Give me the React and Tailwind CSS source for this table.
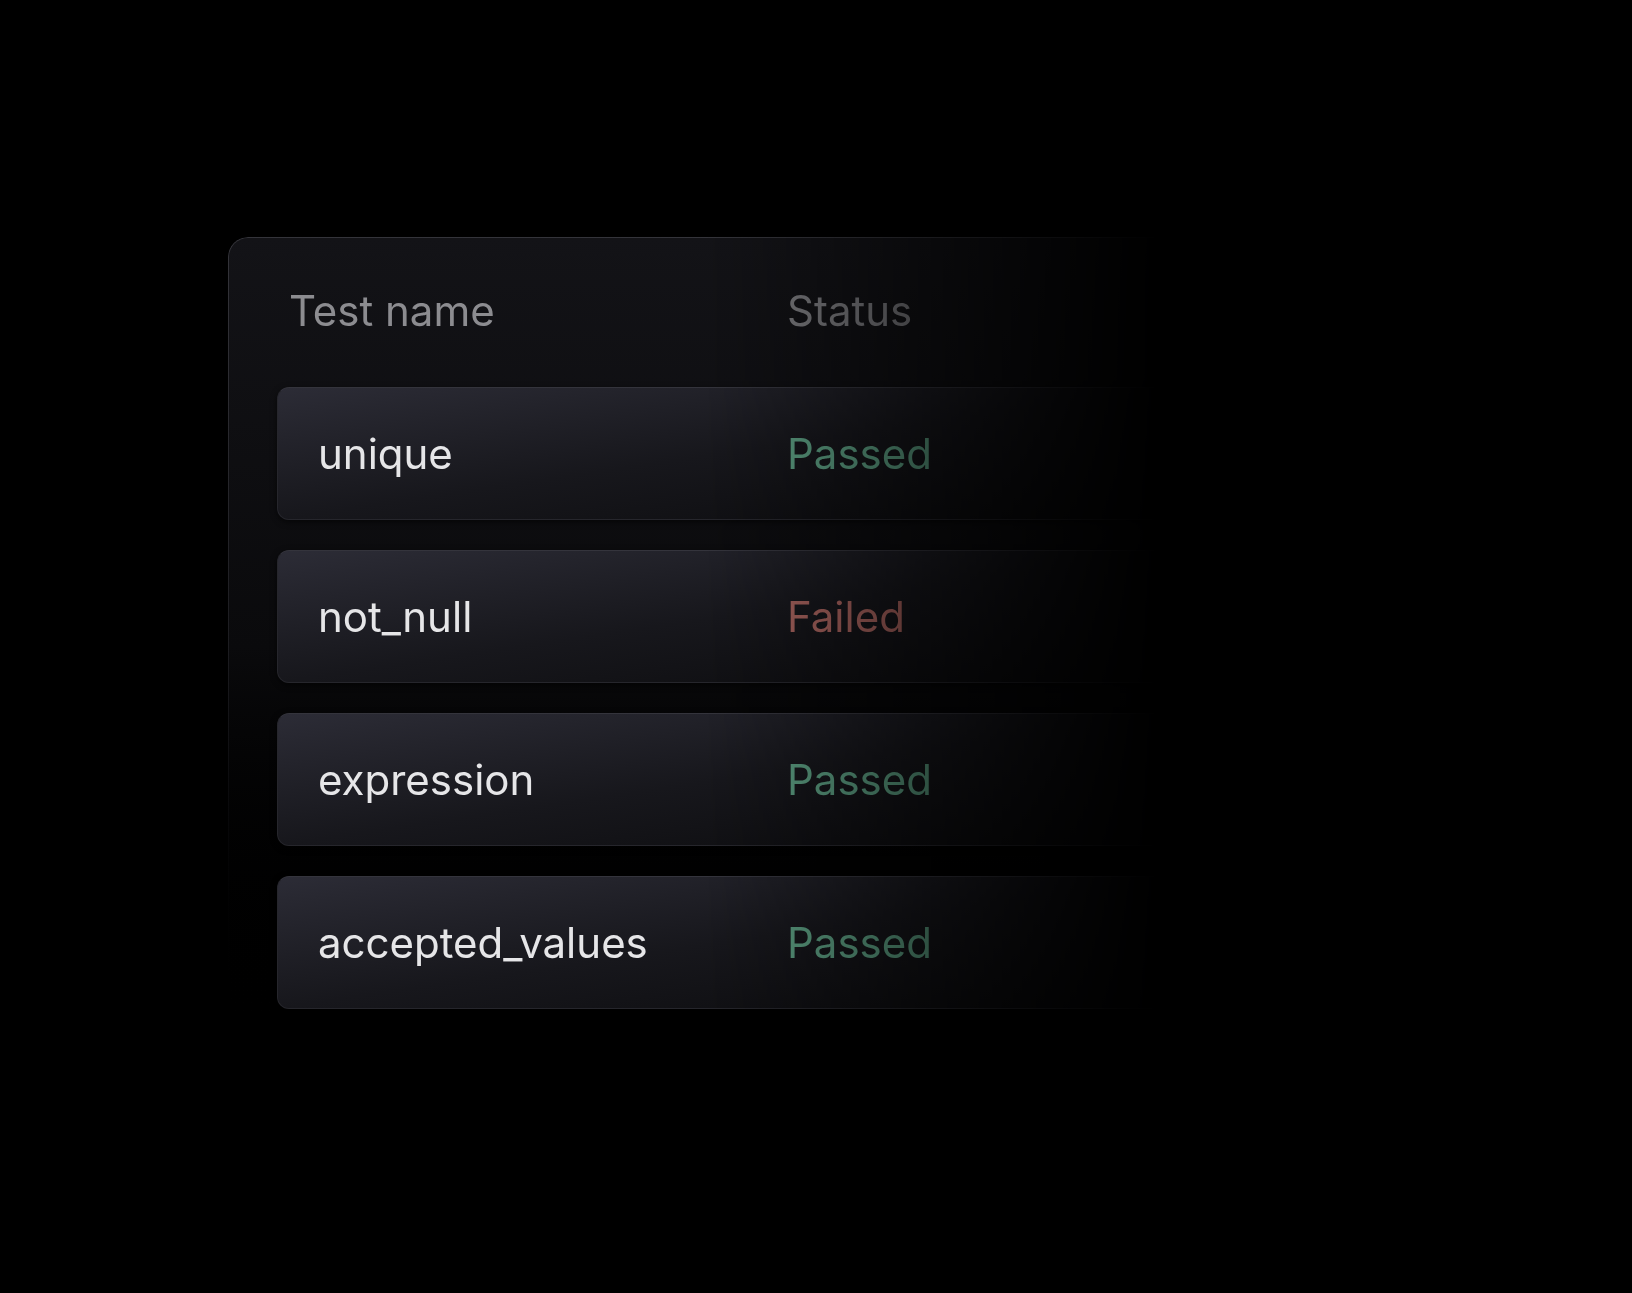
const tests = [
  { name: "unique", status: "Passed" },
  { name: "not_null", status: "Failed" },
  { name: "expression", status: "Passed" },
  { name: "accepted_values", status: "Passed" },
];

export default function App() {
  return (
    <div className="min-h-screen bg-black pt-[237px] pl-[228px] font-['Inter',sans-serif]">
      {/* panel, faded out to the right */}
      <div className="w-[990px] rounded-[20px] p-px bg-gradient-to-b from-[#34343a] via-[#1c1c20] to-black [mask-image:linear-gradient(to_right,black_48%,transparent_94%)]">
        <div className="rounded-[19px] bg-gradient-to-b from-[#131317] via-[#0a0a0c] to-black px-12 pt-[48px] pb-12">
          {/* header */}
          <div className="flex pl-3 text-[42px] leading-[50px]">
            <div className="w-[498px] text-[#8c8c90]">Test name</div>
            <div className="text-[#7a7a7e]">Status</div>
          </div>

          {/* rows */}
          <div className="mt-[51px] flex flex-col gap-[30px]">
            {tests.map((t) => (
              <div
                key={t.name}
                className="flex h-[133px] items-center rounded-xl border border-[#26262c] border-t-[#34343c] bg-gradient-to-br from-[#2c2c36] via-[#17171c] to-[#0b0b0d] px-10 text-[42px] leading-[50px] shadow-[0_2px_6px_rgba(0,0,0,0.6)]"
              >
                <div className="w-[469px] text-[#e6e6e8]">{t.name}</div>
                <div className={t.status === "Passed" ? "text-[#5c9e82]" : "text-[#a8635e]"}>
                  {t.status}
                </div>
              </div>
            ))}
          </div>
        </div>
      </div>
    </div>
  );
}
